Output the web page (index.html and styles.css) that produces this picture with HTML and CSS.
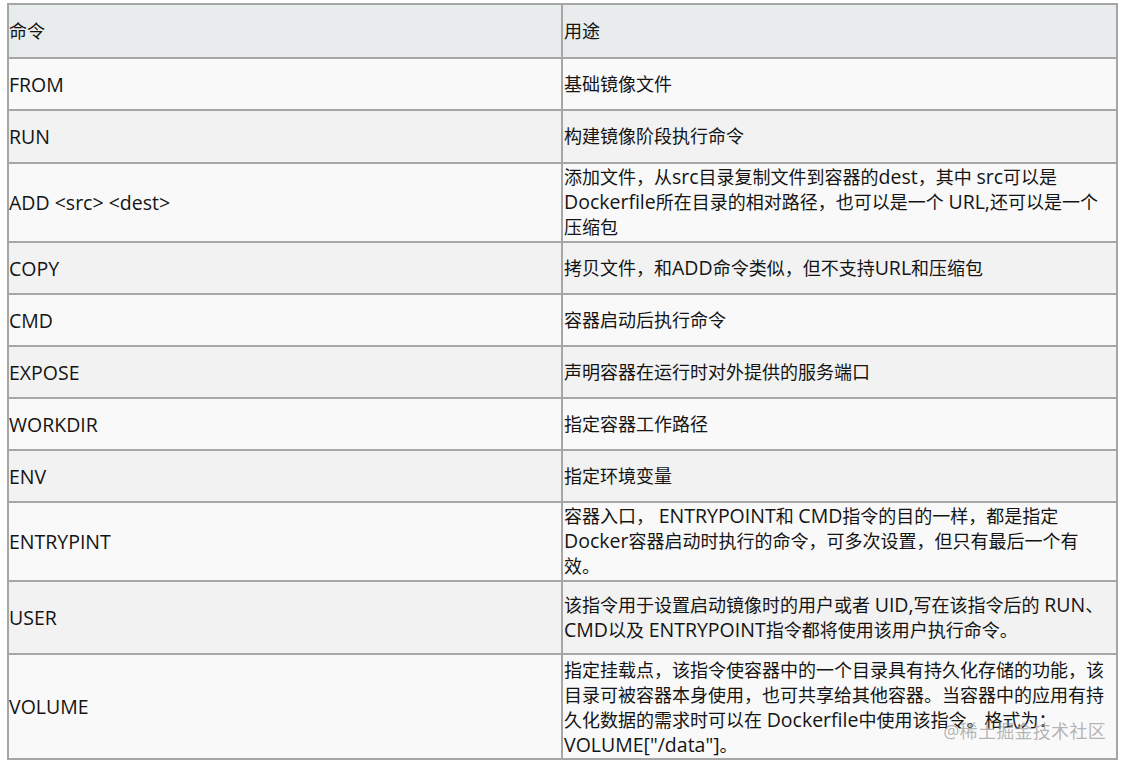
FILE: index.html
```html
<!DOCTYPE html>
<html lang="zh-CN">
<head>
<meta charset="utf-8">
<title>Dockerfile 命令</title>
<link rel="stylesheet" href="styles.css">
</head>
<body>
<div class="page">
  <table class="cmd-table">
    <tr class="head h54"><td>命令</td><td>用途</td></tr>
    <tr class="light h52"><td class="en">FROM</td><td>基础镜像文件</td></tr>
    <tr class="dark h53"><td class="en">RUN</td><td>构建镜像阶段执行命令</td></tr>
    <tr class="light h79"><td class="en">ADD &lt;src&gt; &lt;dest&gt;</td><td>添加文件，从<span class="en">src</span>目录复制文件到容器的<span class="en">dest</span>，其中 <span class="en">src</span>可以是<br><span class="en">Dockerfile</span>所在目录的相对路径，也可以是一个 <span class="en">URL,</span>还可以是一个<br>压缩包</td></tr>
    <tr class="dark h52"><td class="en">COPY</td><td>拷贝文件，和<span class="en">ADD</span>命令类似，但不支持<span class="en">URL</span>和压缩包</td></tr>
    <tr class="light h52"><td class="en">CMD</td><td>容器启动后执行命令</td></tr>
    <tr class="dark h52"><td class="en">EXPOSE</td><td>声明容器在运行时对外提供的服务端口</td></tr>
    <tr class="light h52"><td class="en">WORKDIR</td><td>指定容器工作路径</td></tr>
    <tr class="dark h52"><td class="en">ENV</td><td>指定环境变量</td></tr>
    <tr class="light h79"><td class="en">ENTRYPINT</td><td>容器入口， <span class="en">ENTRYPOINT</span>和 <span class="en">CMD</span>指令的目的一样，都是指定<br><span class="en">Docker</span>容器启动时执行的命令，可多次设置，但只有最后一个有<br>效。</td></tr>
    <tr class="dark h73"><td class="en">USER</td><td>该指令用于设置启动镜像时的用户或者 <span class="en">UID,</span>写在该指令后的 <span class="en">RUN</span>、<br><span class="en">CMD</span>以及 <span class="en">ENTRYPOINT</span>指令都将使用该用户执行命令。</td></tr>
    <tr class="light h102"><td class="en">VOLUME</td><td class="pad-top">指定挂载点，该指令使容器中的一个目录具有持久化存储的功能，该<br>目录可被容器本身使用，也可共享给其他容器。当容器中的应用有持<br>久化数据的需求时可以在 <span class="en">Dockerfile</span>中使用该指令。格式为：<br><span class="en">VOLUME["/data"]</span>。</td></tr>
  </table>
  <div class="watermark">@稀土掘金技术社区</div>
</div>
</body>
</html>
```

FILE: styles.css
```css
html, body {
  margin: 0;
  padding: 0;
  background: #ffffff;
}

.page {
  position: relative;
  width: 1128px;
  height: 761px;
  padding: 3px 0 0 7px;
  box-sizing: border-box;
  font-family: "Open Sans", "Noto Sans CJK SC", sans-serif;
  font-size: 18px;
  color: #141414;
}

.cmd-table {
  border-collapse: collapse;
  width: 1111px;
  table-layout: fixed;
}

.cmd-table td {
  border: 2px solid #a6a6a6;
  padding: 0 1px;
  line-height: 25px;
  vertical-align: middle;
  white-space: nowrap;
  width: 50%;
}

.cmd-table td:first-child {
  padding-left: 0;
}

.cmd-table td.en {
  font-size: 19.5px;
}

.cmd-table span.en {
  font-size: 19.5px;
  line-height: 18px;
}

.cmd-table td.pad-top {
  padding-top: 3px;
}

.head td { background: #e8eced; }
.light td { background: #f9f9f9; }
.dark td { background: #f2f2f2; }

.h54 { height: 54px; }
.h52 { height: 52px; }
.h53 { height: 53px; }
.h79 { height: 79px; }
.h73 { height: 73px; }
.h102 { height: 102px; }

.watermark {
  position: absolute;
  right: 22px;
  top: 718px;
  font-size: 18px;
  line-height: 26px;
  color: rgba(150, 150, 150, 0.7);
  letter-spacing: 0.3px;
}
```
